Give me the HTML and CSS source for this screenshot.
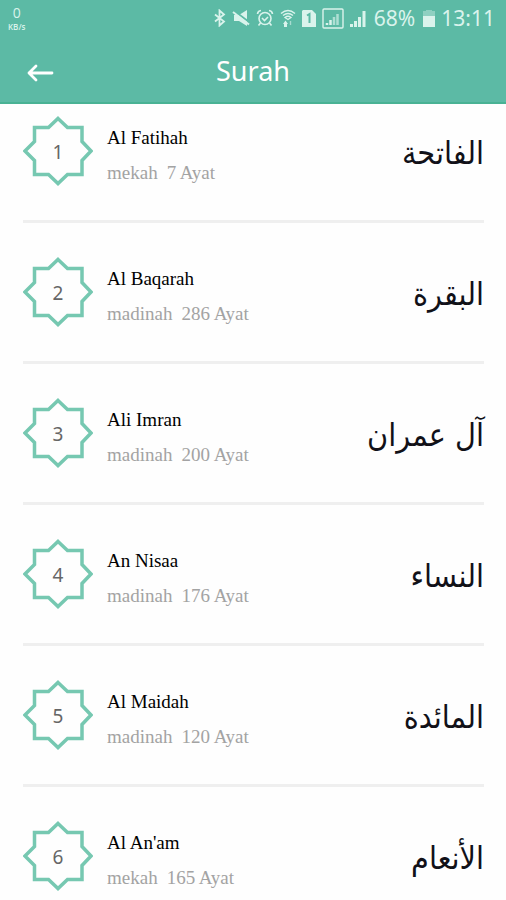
FILE: index.html
```html
<!DOCTYPE html>
<html lang="en">
<head>
<meta charset="utf-8">
<meta name="viewport" content="width=device-width, initial-scale=1">
<title>Surah</title>
<link rel="stylesheet" href="styles.css">
</head>
<body>
<svg class="defs" width="0" height="0" aria-hidden="true">
  <symbol id="star" viewBox="0 0 70 70">
    <path d="M35 2.500 44.500 11.500H59V25.500L68 35 59 44.500V58.500H44.500L35 67.500 25.500 58.500H11.500V44.500L2 35 11.500 25.500V11.500H25.500Z" fill="none" stroke="#76c8b1" stroke-width="3.500"/>
  </symbol>
</svg>
<header class="top">
  <div class="status">
    <div class="speed"><span class="speed-value">0</span><span class="speed-unit">KB/s</span></div>
    <div class="indicators">
      <svg width="12" height="18" viewBox="1 0 12 18" fill="none" stroke="currentColor" stroke-width="1.800"><path d="M2 5.500 11 12.500 6.500 16.500V1.500L11 5.500 2 12.500"/></svg>
      <svg width="18" height="18" viewBox="0 0 18 18" fill="currentColor"><path d="M2 6h5l8-5v16l-8-5H2z"/><path d="M1 1 17 13" stroke="#5cbaa5" stroke-width="2"/><path d="M1 3 17 15.500" stroke="currentColor" stroke-width="2"/></svg>
      <svg width="18" height="18" viewBox="0 0 18 18" fill="none" stroke="currentColor" stroke-width="1.600"><circle cx="9" cy="9.500" r="6"/><path d="M6 9l2.500 2.500L12 8M1.500 5A4 4 0 0 1 5 1.500M13 1.500A4 4 0 0 1 16.500 5M4.500 14l-2 2.500M13.500 14l2 2.500"/></svg>
      <svg width="16" height="19" viewBox="0 0 16 19" fill="none" stroke="currentColor" stroke-width="1.400"><path d="M1 4.500Q8-1.500 15 4.500M3 6.500Q8 2.500 13 6.500M5 8.500Q8 6 11 8.500L8 10.500Z"/><path d="M4 18v-3H3l2.500-3.500L8 15H7v3z" fill="currentColor" stroke="none"/><path d="M10.500 12v4" opacity=".6"/></svg>
      <svg width="14" height="17" viewBox="0 0 14 17"><path d="M1 0h9l4 4v13H0V1z" fill="currentColor"/><path d="M5 5.500 7.500 4v9" fill="none" stroke="#5cbaa5" stroke-width="2"/></svg>
      <svg width="22" height="21" viewBox="0 0 22 21" fill="none" stroke="currentColor" stroke-width="1.400"><rect x="1" y="1" width="20" height="19" rx="1"/><path d="M5 17v-2M8.500 17v-5" stroke-width="2.500"/><path d="M12 17V9M15.500 17V6" stroke-width="2.500" opacity=".65"/></svg>
      <svg width="17" height="17" viewBox="0 0 17 17" fill="none" stroke="currentColor" stroke-width="3"><path d="M1.500 17v-3M5.500 17v-6M9.500 17V7M14 17V1"/></svg>
      <span class="percent">68%</span>
      <svg width="12" height="17" viewBox="0 0 12 17" fill="currentColor"><path d="M3 0h6v1h3v5H0V1h3z" opacity=".4"/><path d="M0 6h12v11H0z"/></svg>
      <time class="clock">13:11</time>
    </div>
  </div>
  <nav class="bar">
    <button class="back" type="button" aria-label="Back"><svg width="27" height="18" viewBox="0 0 27 18" fill="none" stroke="#fff" stroke-width="2.800" stroke-linecap="round" stroke-linejoin="round"><path d="M2 9H25M9 2 2 9l7 7"/></svg></button>
    <h1 class="title">Surah</h1>
  </nav>
</header>
<main>
  <ul class="list">
    <li class="row"><div class="badge"><svg class="star"><use href="#star"/></svg><span class="number">1</span></div><div class="info"><h2 class="name">Al Fatihah</h2><p class="meta"><span>mekah</span><span>7 Ayat</span></p></div><span class="arabic" lang="ar" dir="rtl">الفاتحة</span></li>
    <li class="row"><div class="badge"><svg class="star"><use href="#star"/></svg><span class="number">2</span></div><div class="info"><h2 class="name">Al Baqarah</h2><p class="meta"><span>madinah</span><span>286 Ayat</span></p></div><span class="arabic" lang="ar" dir="rtl">البقرة</span></li>
    <li class="row"><div class="badge"><svg class="star"><use href="#star"/></svg><span class="number">3</span></div><div class="info"><h2 class="name">Ali Imran</h2><p class="meta"><span>madinah</span><span>200 Ayat</span></p></div><span class="arabic" lang="ar" dir="rtl">آل عمران</span></li>
    <li class="row"><div class="badge"><svg class="star"><use href="#star"/></svg><span class="number">4</span></div><div class="info"><h2 class="name">An Nisaa</h2><p class="meta"><span>madinah</span><span>176 Ayat</span></p></div><span class="arabic" lang="ar" dir="rtl">النساء</span></li>
    <li class="row"><div class="badge"><svg class="star"><use href="#star"/></svg><span class="number">5</span></div><div class="info"><h2 class="name">Al Maidah</h2><p class="meta"><span>madinah</span><span>120 Ayat</span></p></div><span class="arabic" lang="ar" dir="rtl">المائدة</span></li>
    <li class="row"><div class="badge"><svg class="star"><use href="#star"/></svg><span class="number">6</span></div><div class="info"><h2 class="name">Al An'am</h2><p class="meta"><span>mekah</span><span>165 Ayat</span></p></div><span class="arabic" lang="ar" dir="rtl">الأنعام</span></li>
  </ul>
</main>
</body>
</html>
```
FILE: styles.css
```css
* { box-sizing: border-box; }
body {
  margin: 0;
  background: #fefefe;
  font-family: "Liberation Serif", serif;
}
h1, h2, p, ul { margin: 0; padding: 0; font-weight: 400; }
.defs { display: block; }
.top {
  background: #5cbaa5;
  border-bottom: 2px solid #49b294;
  color: #fff;
  font-family: "Noto Sans", sans-serif;
}
.status {
  display: flex;
  justify-content: space-between;
  height: 36px;
  padding: 0 11px 0 8px;
  color: #daf3ec;
}
.speed {
  display: flex;
  flex-direction: column;
  align-items: center;
  padding-top: 5px;
  font-family: "Open Sans", sans-serif;
}
.speed-value { font-size: 14px; line-height: 16px; }
.speed-unit { font-size: 8px; line-height: 11px; font-weight: 600; }
.indicators { display: flex; align-items: center; gap: 6px; }
.percent, .clock { font-size: 21px; line-height: 36px; }
.percent { padding: 0 2px 0 1px; }
.bar {
  display: grid;
  grid-template-columns: 1fr auto 1fr;
  align-items: center;
  height: 66px;
  padding: 0 24px;
}
.back {
  justify-self: start;
  display: flex;
  padding: 8px 3px;
  margin-top: 6px;
  border: 0;
  background: none;
}
.title { padding-top: 2px; font-size: 27px; line-height: 66px; }
.list { list-style: none; padding: 0 22px 0 23px; }
.row {
  display: flex;
  align-items: flex-start;
  padding: 34px 0 30px;
  border-bottom: 3px solid #efefef;
}
.row:first-child { padding-top: 12px; }
.row:last-child { border-bottom: 0; padding-bottom: 4px; }
.badge {
  display: grid;
  place-items: center;
  width: 70px;
  height: 70px;
}
.star, .number { grid-area: 1 / 1; }
.star { width: 70px; height: 70px; }
.number {
  padding-top: 2px;
  color: #666;
  font-family: "Noto Sans", sans-serif;
  font-size: 19px;
  line-height: 24px;
}
.info { flex: 1; padding: 4px 0 0 14px; }
.name { color: #000; font-size: 19px; line-height: 35px; }
.meta {
  display: flex;
  gap: 9px;
  color: #a3a3a3;
  font-size: 19px;
  line-height: 35px;
}
.arabic {
  padding-top: 4px;
  color: #111118;
  font-family: "DejaVu Sans Condensed", "DejaVu Sans", sans-serif;
  font-size: 32px;
  line-height: 66px;
}
```
